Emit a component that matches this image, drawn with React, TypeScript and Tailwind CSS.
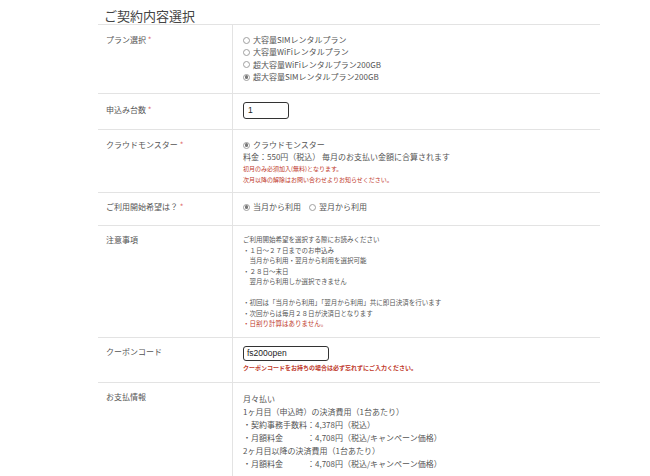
import React from "react";

function Radio({ checked }: { checked?: boolean }) {
  return (
    <span className="inline-flex items-center justify-center w-[7px] h-[7px] rounded-full border border-[#a0a0a0] bg-white mr-[3px] shrink-0">
      {checked ? <span className="block w-[3.5px] h-[3.5px] rounded-full bg-[#777]" /> : null}
    </span>
  );
}

function Row({
  label,
  required,
  children,
  labelPt = "pt-[8px]",
}: {
  label: string;
  required?: boolean;
  children: React.ReactNode;
  labelPt?: string;
}) {
  return (
    <div className="flex border-b border-[#e3e3e3]">
      <div className={`w-[134px] shrink-0 pl-[8px] ${labelPt} text-[8px] leading-[12px] text-[#555]`}>
        {label}
        {required ? <span className="text-[#e06a6a]"> *</span> : null}
      </div>
      <div className="flex-1 border-l border-[#e3e3e3] pl-[10px]">{children}</div>
    </div>
  );
}

export default function App() {
  const plans = [
    "大容量SIMレンタルプラン",
    "大容量WiFiレンタルプラン",
    "超大容量WiFiレンタルプラン200GB",
    "超大容量SIMレンタルプラン200GB",
  ];
  return (
    <div className="w-[650px] h-[476px] overflow-hidden bg-white text-[#555] font-['Noto_Sans_CJK_JP','Noto_Sans',sans-serif]">
      <div className="ml-[98px] w-[502px]">
        <h2 className="pt-[8px] pl-[6px] text-[13px] leading-[16px] text-[#444] font-normal border-b border-[#e3e3e3]">
          ご契約内容選択
        </h2>

        <Row label="プラン選択" required labelPt="pt-[9px]">
          <div className="pt-[9px] pb-[10px] text-[8px] leading-[12.3px]">
            {plans.map((p, i) => (
              <div key={p} className="flex items-center">
                <Radio checked={i === 3} />
                <span>{p}</span>
              </div>
            ))}
          </div>
        </Row>

        <Row label="申込み台数" required labelPt="pt-[10px]">
          <div className="pt-[8px] pb-[10px]">
            <div className="w-[46px] h-[17px] border border-[#333] rounded-[3px] pl-[4px] text-[8.5px] leading-[15px] text-[#222] font-['Liberation_Sans',sans-serif]">
              1
            </div>
          </div>
        </Row>

        <Row label="クラウドモンスター" required labelPt="pt-[9px]">
          <div className="pt-[9px] pb-[7px]">
            <div className="flex items-center text-[8px] leading-[12px]">
              <Radio checked />
              <span>クラウドモンスター</span>
            </div>
            <div className="text-[8px] leading-[12px]">料金：550円（税込） 毎月のお支払い金額に合算されます</div>
            <div className="text-[6px] leading-[11px] text-[#c0392b]">初月のみ必須加入(無料)となります。</div>
            <div className="text-[6px] leading-[11px] text-[#c0392b]">次月以降の解除はお問い合わせよりお知らせください。</div>
          </div>
        </Row>

        <Row label="ご利用開始希望は？" required labelPt="pt-[8px]">
          <div className="pt-[8px] pb-[12px] flex items-center text-[8px] leading-[12px]">
            <Radio checked />
            <span>当月から利用</span>
            <span className="w-[8px]" />
            <Radio />
            <span>翌月から利用</span>
          </div>
        </Row>

        <Row label="注意事項" labelPt="pt-[8px]">
          <div className="pt-[8px] pb-[8px] text-[6.5px] leading-[10.5px] text-[#555]">
            <div>ご利用開始希望を選択する際にお読みください</div>
            <div>・１日～２７日までのお申込み</div>
            <div>　当月から利用・翌月から利用を選択可能</div>
            <div>・２８日～末日</div>
            <div>　翌月から利用しか選択できません</div>
            <div>&nbsp;</div>
            <div>・初回は「当月から利用」「翌月から利用」共に即日決済を行います</div>
            <div>・次回からは毎月２８日が決済日となります</div>
            <div className="text-[#c0392b]">・日割り計算はありません。</div>
          </div>
        </Row>

        <Row label="クーポンコード" labelPt="pt-[8px]">
          <div className="pt-[8px] pb-[9px]">
            <div className="w-[86px] h-[15px] border border-[#333] rounded-[3px] pl-[3px] text-[8.5px] leading-[13px] text-[#222] font-['Liberation_Sans',sans-serif]">
              fs200open
            </div>
            <div className="mt-[2px] text-[6px] leading-[10px] font-bold text-[#c0392b]">
              クーポンコードをお持ちの場合は必ず忘れずにご入力ください。
            </div>
          </div>
        </Row>

        <Row label="お支払情報" labelPt="pt-[8px]">
          <div className="pt-[9px] pb-[10px] text-[8px] leading-[13px] text-[#555]">
            <div>月々払い</div>
            <div>1ヶ月目（申込時）の決済費用（1台あたり）</div>
            <div>・契約事務手数料：4,378円（税込）</div>
            <div>・月額料金　　　：4,708円（税込/キャンペーン価格）</div>
            <div>2ヶ月目以降の決済費用（1台あたり）</div>
            <div>・月額料金　　　：4,708円（税込/キャンペーン価格）</div>
            <div>&nbsp;</div>
          </div>
        </Row>
      </div>
    </div>
  );
}
